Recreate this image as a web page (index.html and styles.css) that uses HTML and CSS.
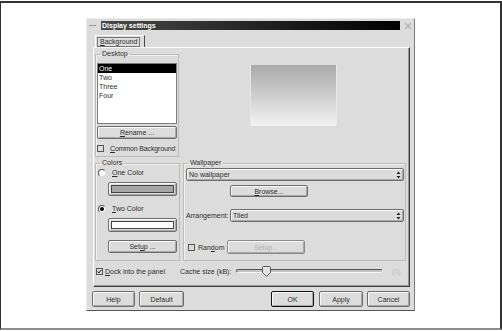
FILE: index.html
```html
<!DOCTYPE html>
<html lang="en">
  <head>
    <meta charset="UTF-8" />
    <title>Display settings</title>
    <link rel="stylesheet" href="styles.css">
  </head>
  <body>
    <div class="frame">
      <div class="dialog">
        <div class="titlebar">
          <span class="menu-dash"></span>
          <div class="title">Display settings</div>
          <svg class="close" width="8" height="8" viewBox="0 0 8 8">
            <path d="M1 1 L7 7 M7 1 L1 7" stroke="#b4b4b4" stroke-width="1.2" fill="none" />
          </svg>
        </div>

        <div class="tabs">
          <div class="tab"><span class="tab-label"><u>B</u>ackground</span></div>
        </div>

        <div class="panel">
          <div class="row-top">
            <fieldset class="group desktop">
              <legend>Desktop</legend>
              <ul class="list">
                <li class="sel">One</li>
                <li>Two</li>
                <li>Three</li>
                <li>Four</li>
              </ul>
              <div class="btn rename"><u>R</u>ename ...</div>
              <div class="check-row common">
                <span class="checkbox"></span>
                <span><u>C</u>ommon Background</span>
              </div>
            </fieldset>
            <div class="preview-wrap">
              <div class="preview"></div>
            </div>
          </div>

          <div class="row-mid">
            <fieldset class="group colors">
              <legend>Colors</legend>
              <div class="radio-row">
                <span class="radio"></span>
                <span><u>O</u>ne Color</span>
              </div>
              <div class="swatch"><div class="swatch-fill gray"></div></div>
              <div class="radio-row second">
                <span class="radio on"></span>
                <span><u>T</u>wo Color</span>
              </div>
              <div class="swatch"><div class="swatch-fill white"></div></div>
              <div class="btn setup">Set<u>u</u>p ...</div>
            </fieldset>

            <fieldset class="group wallpaper">
              <legend>Wallpaper</legend>
              <div class="combo wide">
                <span>No wallpaper</span>
                <svg width="5" height="8" viewBox="0 0 5 8"><path d="M2.5 0.5 L4.5 3 L0.5 3 Z M0.5 5 L4.5 5 L2.5 7.5 Z" fill="#222" /></svg>
              </div>
              <div class="btn browse"><u>B</u>rowse...</div>
              <div class="arr-row">
                <span class="arr-label">Arrangement:</span>
                <div class="combo">
                  <span>Tiled</span>
                  <svg width="5" height="8" viewBox="0 0 5 8"><path d="M2.5 0.5 L4.5 3 L0.5 3 Z M0.5 5 L4.5 5 L2.5 7.5 Z" fill="#222" /></svg>
                </div>
              </div>
              <div class="random-row">
                <div class="check-row">
                  <span class="checkbox"></span>
                  <span>Ran<u>d</u>om</span>
                </div>
                <div class="btn browse disabled">Setup...</div>
              </div>
            </fieldset>
          </div>

          <div class="row-bottom">
            <div class="check-row dock">
              <span class="checkbox">
                <svg width="7" height="7" viewBox="0 0 7 7"><path d="M1 3.5 L2.8 5.5 L6 1.2" stroke="#111" stroke-width="1.4" fill="none" /></svg>
              </span>
              <span><u>D</u>ock into the panel</span>
            </div>
            <span class="cache-label">Cache size (kB):</span>
            <div class="slider">
              <div class="groove"></div>
              <svg class="thumb" width="9" height="11" viewBox="0 0 9 11">
                <path d="M1.5 0.5 H7.5 Q8.5 0.5 8.5 1.5 V6.5 L4.5 10.5 L0.5 6.5 V1.5 Q0.5 0.5 1.5 0.5 Z" fill="#e4e4e4" stroke="#555" stroke-width="1" />
              </svg>
            </div>
            <span class="cache-value">(0)</span>
          </div>
        </div>

        <div class="buttons">
          <div class="btn b-help">Help</div>
          <div class="btn b-default">Default</div>
          <div class="spacer"></div>
          <div class="btn b-ok">OK</div>
          <div class="btn b-apply">Apply</div>
          <div class="btn b-cancel">Cancel</div>
        </div>
      </div>
    </div>
  </body>
</html>
```

FILE: styles.css
```css
body {
  margin: 0;
  padding: 0;
  background-color: #fff;
  font-family: "Liberation Sans", Arial, sans-serif;
  font-size: 7px;
  color: #2e2e2e;
  white-space: nowrap;
}

.frame {
  box-sizing: border-box;
  width: 502px;
  height: 329px;
  margin-top: 1px;
  border: 2px solid #333;
  border-left-width: 1px;
  border-bottom-color: #8c8c8c;
  padding: 15px 0 0 85px;
}

.dialog {
  box-sizing: border-box;
  width: 329px;
  height: 293px;
  background-color: #dcdcdc;
  border: 1px solid;
  border-color: #ececec #7a7a7a #555 #ececec;
  display: flex;
  flex-direction: column;
}

/* title bar */
.titlebar {
  display: flex;
  align-items: center;
  height: 9px;
  margin: 2px 2px 0;
}

.menu-dash {
  width: 7px;
  height: 1px;
  background-color: #9a9a9a;
  margin-right: 5px;
}

.title {
  flex: 1;
  height: 9px;
  line-height: 9px;
  padding-left: 1px;
  background: linear-gradient(90deg, #4a4a4a, #000);
  color: #fff;
  font-weight: bold;
}

.close {
  margin-left: 4px;
}

/* tab */
.tabs {
  display: flex;
  height: 12px;
  margin: 5px 0 0 8px;
}

.tab {
  box-sizing: border-box;
  width: 50px;
  height: 12px;
  border: 1px solid;
  border-color: #fff #4a4a4a transparent #fff;
  border-bottom: none;
  padding: 1px 0 0 1px;
}

.tab-label {
  display: inline-block;
  border: 1px solid #777;
  padding: 0 2px;
  line-height: 8px;
}

.panel {
  box-sizing: border-box;
  height: 240px;
  margin: 0 4px 0 6px;
  border: 1px solid;
  border-color: #fff #3c3c3c #3c3c3c #fff;
  box-shadow: inset -1px -1px 0 #999;
  padding: 2px 2px 0 1px;
}

/* group boxes */
.group {
  box-sizing: border-box;
  margin: 0;
  padding: 0 1px;
  min-width: 0;
  border: 1px solid #bcbcbc;
  box-shadow: inset 1px 1px 0 #f0f0f0;
}

.group legend {
  margin-left: 3px;
  padding: 0 2px;
  line-height: 8px;
}

.row-top {
  display: flex;
  height: 109px;
}

.desktop {
  width: 84px;
  height: 107px;
}

.list {
  box-sizing: border-box;
  width: 80px;
  height: 61px;
  margin: 5px 0 0;
  padding: 0;
  list-style: none;
  background-color: #fff;
  border: 1px solid #7c7c7c;
}

.list li {
  height: 9px;
  line-height: 9px;
  padding-left: 1px;
}

.list li.sel {
  background-color: #000;
  color: #fff;
}

.preview-wrap {
  padding: 15px 0 0 71px;
}

.preview {
  width: 87px;
  height: 61px;
  background: linear-gradient(180deg, #a9a9a9, #f3f3f3);
  box-shadow: inset 1px 0 0 #e8e8e8, inset -1px 0 0 #e8e8e8;
}

/* buttons */
.btn {
  box-sizing: border-box;
  display: flex;
  align-items: center;
  justify-content: center;
  background-color: #dcdcdc;
  border: 1px solid #6e6e6e;
  border-radius: 2px;
  box-shadow: inset 1px 1px 0 #f8f8f8, inset -1px -1px 0 #a8a8a8;
}

.btn.disabled {
  color: #b0b0b0;
  border-color: #8a8a8a;
}

.rename {
  width: 80px;
  height: 13px;
  margin-top: 2px;
}

.check-row {
  display: flex;
  align-items: center;
  gap: 5px;
}

.checkbox {
  box-sizing: border-box;
  flex: none;
  width: 7px;
  height: 7px;
  border: 1px solid #555;
  background-color: #dcdcdc;
  display: flex;
  align-items: center;
  justify-content: center;
}

.common {
  margin-top: 6px;
  height: 7px;
  gap: 6px;
  letter-spacing: -0.15px;
}

.row-mid {
  display: flex;
  gap: 3px;
  height: 102px;
}

.colors {
  width: 85px;
}

.wallpaper {
  width: 223px;
}

.radio-row {
  display: flex;
  align-items: center;
  height: 9px;
  margin: 1px 0 0 1px;
  gap: 6px;
}

.radio-row.second {
  margin-top: 8px;
}

.radio {
  box-sizing: border-box;
  width: 8px;
  height: 8px;
  border-radius: 50%;
  border: 1px solid;
  border-color: #555 #ddd #ddd #555;
  background-color: #fff;
  display: flex;
  align-items: center;
  justify-content: center;
}

.radio.on::after {
  content: "";
  width: 4px;
  height: 4px;
  border-radius: 50%;
  background-color: #000;
}

.swatch {
  box-sizing: border-box;
  width: 69px;
  height: 14px;
  margin: 5px 0 0 11px;
  padding: 2px;
  border: 1px solid #6e6e6e;
  border-radius: 2px;
  box-shadow: inset 1px 1px 0 #f8f8f8, inset -1px -1px 0 #a8a8a8;
}

.swatch-fill {
  height: 100%;
  box-sizing: border-box;
  border: 1px solid #444;
}

.swatch-fill.gray {
  background-color: #a6a6a6;
}

.swatch-fill.white {
  background-color: #fff;
}

.setup {
  width: 69px;
  height: 13px;
  margin: 8px 0 0 11px;
}

.combo {
  box-sizing: border-box;
  flex: 1;
  height: 13px;
  display: flex;
  align-items: center;
  justify-content: space-between;
  padding: 0 2px 0 2px;
  border: 1px solid #6e6e6e;
  border-radius: 2px;
  box-shadow: inset 1px 1px 0 #f8f8f8, inset -1px -1px 0 #a8a8a8;
}

.combo.wide {
  width: 218px;
  margin: 1px 0 0 1px;
}

.browse {
  width: 78px;
  height: 12px;
  margin: 4px 0 0 45px;
}

.arr-row {
  display: flex;
  align-items: center;
  width: 218px;
  margin: 12px 0 0 1px;
}

.arr-label {
  width: 44px;
}

.random-row {
  display: flex;
  align-items: center;
  height: 14px;
  margin: 18px 0 0 3px;
}

.random-row .check-row {
  width: 39px;
  gap: 3px;
}

.random-row .browse {
  height: 14px;
  margin: 0;
}

/* bottom row */
.row-bottom {
  display: flex;
  align-items: center;
  height: 20px;
}

.dock {
  width: 84px;
  margin-left: 1px;
  gap: 2px;
}

.cache-label {
  width: 56px;
}

.slider {
  position: relative;
  width: 147px;
  height: 11px;
  display: flex;
  align-items: center;
}

.groove {
  box-sizing: border-box;
  width: 100%;
  height: 4px;
  border: 1px solid;
  border-color: #555 #f4f4f4 #f4f4f4 #555;
  border-radius: 2px;
  background-color: #c4c4c4;
}

.thumb {
  position: absolute;
  left: 26px;
  top: 0;
}

.cache-value {
  margin-left: 9px;
  color: #bcbcbc;
}

/* dialog buttons */
.buttons {
  display: flex;
  height: 16px;
  margin-top: 4px;
  padding: 0 4px 0 5px;
  gap: 4px;
}

.spacer {
  flex: 1;
}

.b-help,
.b-ok,
.b-cancel {
  width: 43px;
}

.b-default {
  width: 45px;
}

.b-apply {
  width: 44px;
  margin-left: 1px;
}

.b-ok {
  border-color: #111;
}
```
